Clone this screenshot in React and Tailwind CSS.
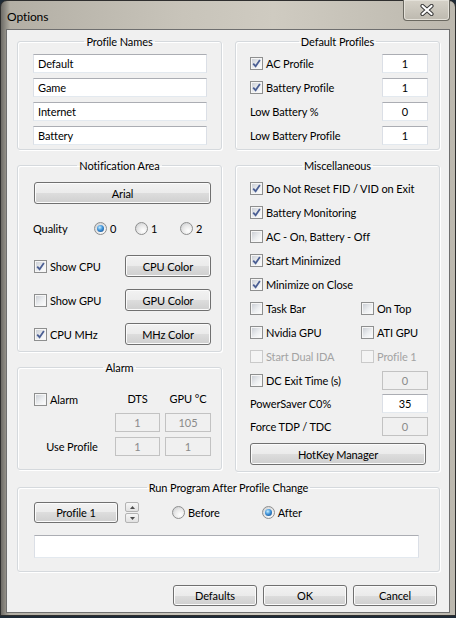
import React from 'react';

// Win7 style "Options" dialog

const Check = ({ checked, disabled }) => (
  <span
    className={`flex h-[13px] w-[13px] shrink-0 items-center justify-center border ${
      disabled
        ? 'border-[#cacaca] bg-[#f4f4f4]'
        : 'border-[#8e8f8f] bg-[linear-gradient(135deg,#c6cad1_0%,#eceef0_55%,#ffffff_100%)] shadow-[inset_0_0_0_1px_#f6f6f6]'
    }`}
  >
    {checked && (
      <svg width="9" height="9" viewBox="0 0 9 9">
        <path d="M1.2 4.6 L3.6 7.2 L7.9 1.1" fill="none" stroke="#4b5f94" strokeWidth="1.8" />
      </svg>
    )}
  </span>
);

const CheckLabel = ({ checked, disabled, children }) => (
  <label className={`flex items-center gap-[3px] ${disabled ? 'text-[#a3a3a3]' : 'text-black'}`}>
    <Check checked={checked} disabled={disabled} />
    <span>{children}</span>
  </label>
);

const Radio = ({ checked }) => (
  <span className="flex h-[13px] w-[13px] shrink-0 items-center justify-center rounded-full border border-[#8e8f8f] bg-[radial-gradient(circle_at_65%_70%,#ffffff_0%,#e8e8e8_50%,#c4c6c9_100%)]">
    {checked && (
      <span className="h-[7px] w-[7px] rounded-full bg-[radial-gradient(circle_at_40%_35%,#c6eeff_0%,#3f93d9_45%,#0b3c7a_100%)]" />
    )}
  </span>
);

const RadioLabel = ({ checked, children }) => (
  <label className="flex items-center gap-[3px]">
    <Radio checked={checked} />
    <span>{children}</span>
  </label>
);

const Btn = ({ className = '', children }) => (
  <div
    className={`flex items-center justify-center rounded-[3px] border border-[#707070] bg-[linear-gradient(to_bottom,#f2f2f2_0%,#ebebeb_50%,#dddddd_50%,#cfcfcf_100%)] shadow-[inset_0_0_0_1px_#fbfbfb] text-black ${className}`}
  >
    {children}
  </div>
);

const Field = ({ value, disabled, center, className = '' }) => (
  <div
    className={`flex h-[19px] items-center border ${
      disabled
        ? 'border-[#c2c2c2] bg-[#f0f0f0] text-[#8a8a8a]'
        : 'border-t-[#abadb3] border-x-[#dbdfe6] border-b-[#e3e9ef] bg-white text-black'
    } ${center ? 'justify-center' : 'pl-[4px]'} ${className}`}
  >
    {value}
  </div>
);

const Group = ({ title, className = '', children }) => (
  <fieldset
    className={`rounded-[3px] border border-[#d5d9dd] shadow-[inset_1px_1px_0_#ffffff,1px_1px_0_#ffffff] ${className}`}
  >
    <legend className="mx-auto px-[2px] leading-[15px]">{title}</legend>
    {children}
  </fieldset>
);

const Spin = () => (
  <div className="flex h-[21px] w-[14px] flex-col gap-px">
    <div className="flex flex-1 items-center justify-center rounded-[2px] border border-[#b3b3b3] bg-[linear-gradient(to_bottom,#f6f6f6,#e2e2e2)]">
      <svg width="5" height="3" viewBox="0 0 5 3"><path d="M0 3 L2.5 0 L5 3 Z" fill="#4d4d4d" /></svg>
    </div>
    <div className="flex flex-1 items-center justify-center rounded-[2px] border border-[#b3b3b3] bg-[linear-gradient(to_bottom,#f6f6f6,#e2e2e2)]">
      <svg width="5" height="3" viewBox="0 0 5 3"><path d="M0 0 L2.5 3 L5 0 Z" fill="#4d4d4d" /></svg>
    </div>
  </div>
);

const App = () => {
  const profileNames = ['Default', 'Game', 'Internet', 'Battery'];

  return (
    <div className="h-[618px] w-[456px] overflow-hidden bg-[#1e2a36] font-['Lato','Noto_Sans',sans-serif] text-[11px] leading-[15px] tracking-[-0.1px] text-black">
      <div className="flex h-[616px] flex-col rounded-t-[7px] border border-[#2f2f2f] bg-[linear-gradient(to_right,#6d6b66_0%,#b3afa5_2%,#c8c4ba_40%,#cfcbc1_60%,#bcb8ae_100%)]">
        {/* title bar */}
        <div className="flex h-[28px] items-start justify-between">
          <span className="pl-[6px] pt-[8px] text-[12px]">Options</span>
          <div className="-mt-px mr-[5px] flex h-[21px] w-[47px] items-center justify-center rounded-b-[4px] border border-t-0 border-[#6a6860] bg-[linear-gradient(to_bottom,#d6d2c8,#bdb9af)] shadow-[inset_0_0_0_1px_#e4e1d9]">
            <svg width="14" height="12" viewBox="0 0 14 12">
              <path d="M2.5 2 L11.5 10 M11.5 2 L2.5 10" stroke="#3a3a3a" strokeWidth="4.2" strokeLinecap="round" />
              <path d="M2.5 2 L11.5 10 M11.5 2 L2.5 10" stroke="#ffffff" strokeWidth="2.2" strokeLinecap="round" />
            </svg>
          </div>
        </div>

        {/* client area */}
        <div className="mx-[5px] flex h-[584px] flex-col border border-[#6f6f6f] bg-[#f0f0f0] pl-[10px] pr-[9px] pt-[4px]">
          <div className="flex flex-col gap-[8px]">
            <div className="grid grid-cols-2 gap-x-[13px]">
              {/* left column */}
              <div className="flex flex-col gap-[8px]">
                <Group title="Profile Names">
                  <div className="flex flex-col gap-[5px] pb-[4px] pl-[15px] pr-[14px] pt-[5px]">
                    {profileNames.map((n) => (
                      <Field key={n} value={n} />
                    ))}
                  </div>
                </Group>

                <Group title="Notification Area">
                  <div className="flex flex-col pb-[6px] pl-[16px] pr-[10px] pt-[9px]">
                    <Btn className="h-[22px]">Arial</Btn>
                    <div className="mt-[16px] grid h-[16px] grid-cols-[60px_41px_45px_auto] items-center">
                      <span className="-ml-px">Quality</span>
                      <RadioLabel checked>0</RadioLabel>
                      <RadioLabel>1</RadioLabel>
                      <RadioLabel>2</RadioLabel>
                    </div>
                    <div className="mt-[19px] flex h-[22px] items-center justify-between">
                      <CheckLabel checked>Show CPU</CheckLabel>
                      <Btn className="h-[22px] w-[86px]">CPU Color</Btn>
                    </div>
                    <div className="mt-[12px] flex h-[22px] items-center justify-between">
                      <CheckLabel>Show GPU</CheckLabel>
                      <Btn className="h-[22px] w-[86px]">GPU Color</Btn>
                    </div>
                    <div className="mt-[12px] flex h-[22px] items-center justify-between">
                      <CheckLabel checked>CPU MHz</CheckLabel>
                      <Btn className="h-[22px] w-[86px]">MHz Color</Btn>
                    </div>
                  </div>
                </Group>

                <Group title="Alarm">
                  <div className="grid grid-cols-[76px_45px_46px] gap-x-[5px] pb-[13px] pl-[16px] pt-[16px]">
                    <div className="flex h-[16px] items-center">
                      <CheckLabel>Alarm</CheckLabel>
                    </div>
                    <span className="text-center">DTS</span>
                    <span className="text-center">GPU °C</span>

                    <span className="mt-[6px]" />
                    <Field disabled center value="1" className="mt-[6px]" />
                    <Field disabled center value="105" className="mt-[6px]" />

                    <span className="mt-[5px] flex h-[19px] items-center justify-center">Use Profile</span>
                    <Field disabled center value="1" className="mt-[5px]" />
                    <Field disabled center value="1" className="mt-[5px]" />
                  </div>
                </Group>
              </div>

              {/* right column */}
              <div className="flex flex-col gap-[8px]">
                <Group title="Default Profiles">
                  <div className="flex flex-col gap-[5px] pb-[4px] pl-[14px] pr-[11px] pt-[5px]">
                    <div className="flex items-center justify-between">
                      <CheckLabel checked>AC Profile</CheckLabel>
                      <Field center value="1" className="w-[46px]" />
                    </div>
                    <div className="flex items-center justify-between">
                      <CheckLabel checked>Battery Profile</CheckLabel>
                      <Field center value="1" className="w-[46px]" />
                    </div>
                    <div className="flex items-center justify-between">
                      <span>Low Battery %</span>
                      <Field center value="0" className="w-[46px]" />
                    </div>
                    <div className="flex items-center justify-between">
                      <span>Low Battery Profile</span>
                      <Field center value="1" className="w-[46px]" />
                    </div>
                  </div>
                </Group>

                <Group title="Miscellaneous" className="flex-1">
                  <div className="flex flex-col pb-[6px] pl-[14px] pr-[11px] pt-[3px]">
                    <div className="flex h-6 items-center whitespace-nowrap">
                      <CheckLabel checked>Do Not Reset FID / VID on Exit</CheckLabel>
                    </div>
                    <div className="flex h-6 items-center">
                      <CheckLabel checked>Battery Monitoring</CheckLabel>
                    </div>
                    <div className="flex h-6 items-center">
                      <CheckLabel>AC - On, Battery - Off</CheckLabel>
                    </div>
                    <div className="flex h-6 items-center">
                      <CheckLabel checked>Start Minimized</CheckLabel>
                    </div>
                    <div className="flex h-6 items-center">
                      <CheckLabel checked>Minimize on Close</CheckLabel>
                    </div>
                    <div className="grid h-6 grid-cols-[111px_auto] items-center">
                      <CheckLabel>Task Bar</CheckLabel>
                      <CheckLabel>On Top</CheckLabel>
                    </div>
                    <div className="grid h-6 grid-cols-[111px_auto] items-center">
                      <CheckLabel>Nvidia GPU</CheckLabel>
                      <CheckLabel>ATI GPU</CheckLabel>
                    </div>
                    <div className="grid h-6 grid-cols-[111px_auto] items-center">
                      <CheckLabel disabled>Start Dual IDA</CheckLabel>
                      <CheckLabel disabled>Profile 1</CheckLabel>
                    </div>
                    <div className="flex h-6 items-center justify-between">
                      <CheckLabel>DC Exit Time (s)</CheckLabel>
                      <Field disabled center value="0" className="w-[46px]" />
                    </div>
                    <div className="flex h-[23px] items-center justify-between">
                      <span>PowerSaver C0%</span>
                      <Field center value="35" className="w-[46px]" />
                    </div>
                    <div className="flex h-[23px] items-center justify-between">
                      <span>Force TDP / TDC</span>
                      <Field disabled center value="0" className="w-[46px]" />
                    </div>
                    <Btn className="mt-[5px] h-[22px] w-[176px]">HotKey Manager</Btn>
                  </div>
                </Group>
              </div>
            </div>

            <Group title="Run Program After Profile Change">
              <div className="flex flex-col pb-[13px] pl-[16px] pt-[7px]">
                <div className="flex h-[21px] items-center">
                  <Btn className="h-[21px] w-[84px]">Profile 1</Btn>
                  <div className="ml-[7px]">
                    <Spin />
                  </div>
                  <div className="ml-[33px]">
                    <RadioLabel>Before</RadioLabel>
                  </div>
                  <div className="ml-[42px]">
                    <RadioLabel checked>After</RadioLabel>
                  </div>
                </div>
                <div className="mt-[12px] h-[23px] w-[385px] border border-t-[#abadb3] border-x-[#dbdfe6] border-b-[#e3e9ef] bg-white" />
              </div>
            </Group>
          </div>

          <div className="mt-[13px] flex justify-end gap-[6px] pr-[3px]">
            <Btn className="h-[21px] w-[84px]">Defaults</Btn>
            <Btn className="h-[21px] w-[84px]">OK</Btn>
            <Btn className="h-[21px] w-[84px]">Cancel</Btn>
          </div>
        </div>
      </div>
    </div>
  );
};

export default App;
